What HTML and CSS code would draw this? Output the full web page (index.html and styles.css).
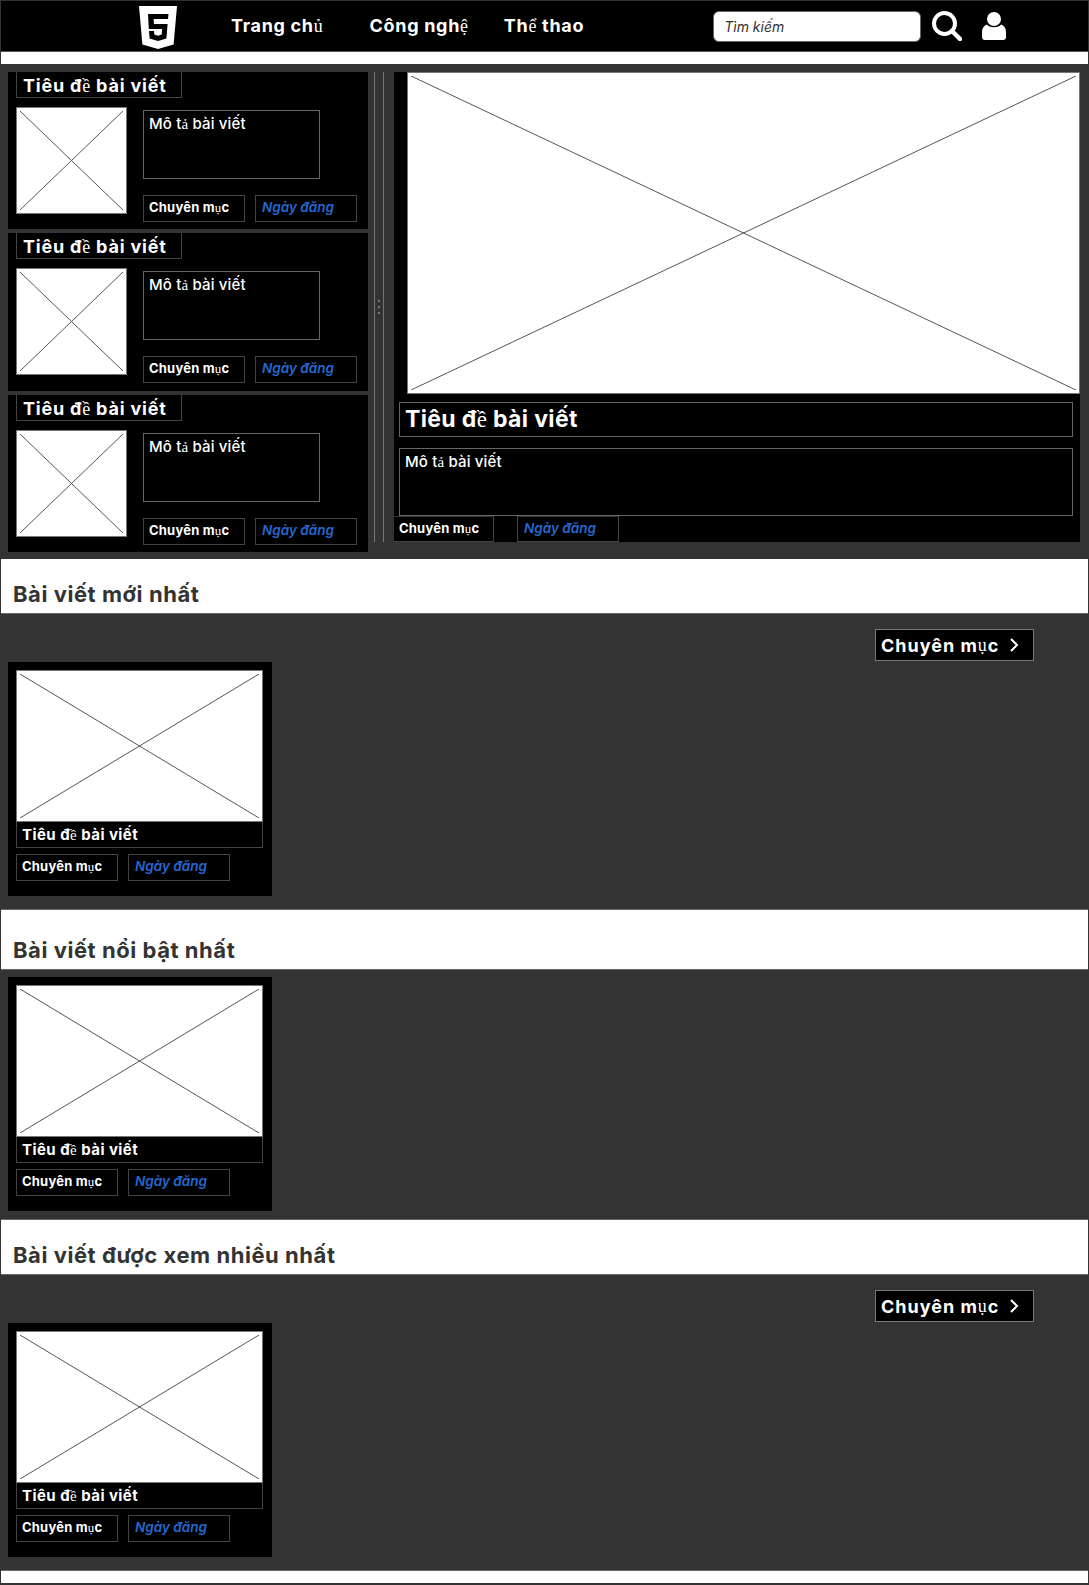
FILE: index.html
```html
<!DOCTYPE html>
<html lang="vi">
<head>
    <meta charset="UTF-8">
    <meta name="viewport" content="width=device-width, initial-scale=1.0">
    <title>Trang chủ</title>
    <link rel="stylesheet" href="styles.css">
</head>
<body>
<div class="page">
    <header class="topbar">
        <svg class="logo" viewBox="0 0 38 43">
            <path fill="#fff" d="M0 0H38L34.6 38.6 19 43 3.4 38.6Z"/>
            <path fill="#000" d="M9 8H29.5L29 13H14.6L15 18H28.6L27.4 32.5 19 35 10.6 32.5 10 25H15L15.3 28.6 19 29.7 22.7 28.6 23.1 23H9.8Z"/>
        </svg>
        <nav class="mainnav">
            <a href="#">Trang ch<span class="alt">ủ</span></a>
            <a href="#">Công ngh<span class="alt">ệ</span></a>
            <a href="#">Th<span class="alt">ể</span> thao</a>
        </nav>
        <input class="search" type="text" placeholder="Tìm kiếm">
        <svg class="icon-search" viewBox="0 0 30 30">
            <circle cx="12.5" cy="12.5" r="10.5" fill="none" stroke="#fff" stroke-width="4"/>
            <path d="M20 20L28 28" stroke="#fff" stroke-width="4.5" stroke-linecap="round"/>
        </svg>
        <svg class="icon-user" viewBox="0 0 24 28">
            <circle cx="12" cy="7" r="7" fill="#fff"/>
            <path fill="#fff" d="M5 12.5C7 16 17 16 19 12.5 22 13.5 24 16 24 20V25C24 27 23 28 21 28H3C1 28 0 27 0 25V20C0 16 2 13.5 5 12.5Z"/>
        </svg>
    </header>
    <div class="strip"></div>

    <section class="hero">
        <div class="hero-list">
            <article class="side-card">
                <h3 class="side-title">Tiêu đ<span class="alt">ề</span> bài viết</h3>
                <div class="side-body">
                    <div class="thumb side-thumb"><svg viewBox="0 0 100 100" preserveAspectRatio="none"><line x1="0" y1="0" x2="100" y2="100"/><line x1="100" y1="0" x2="0" y2="100"/></svg></div>
                    <div class="side-info">
                        <p class="desc side-desc">Mô t<span class="alt">ả</span> bài viết</p>
                        <div class="meta"><span class="tag">Chuyên m<span class="alt">ụ</span>c</span><span class="date">Ngày đăng</span></div>
                    </div>
                </div>
            </article>
            <article class="side-card side-card-tall">
                <h3 class="side-title">Tiêu đ<span class="alt">ề</span> bài viết</h3>
                <div class="side-body">
                    <div class="thumb side-thumb"><svg viewBox="0 0 100 100" preserveAspectRatio="none"><line x1="0" y1="0" x2="100" y2="100"/><line x1="100" y1="0" x2="0" y2="100"/></svg></div>
                    <div class="side-info">
                        <p class="desc side-desc">Mô t<span class="alt">ả</span> bài viết</p>
                        <div class="meta"><span class="tag">Chuyên m<span class="alt">ụ</span>c</span><span class="date">Ngày đăng</span></div>
                    </div>
                </div>
            </article>
            <article class="side-card">
                <h3 class="side-title">Tiêu đ<span class="alt">ề</span> bài viết</h3>
                <div class="side-body">
                    <div class="thumb side-thumb"><svg viewBox="0 0 100 100" preserveAspectRatio="none"><line x1="0" y1="0" x2="100" y2="100"/><line x1="100" y1="0" x2="0" y2="100"/></svg></div>
                    <div class="side-info">
                        <p class="desc side-desc">Mô t<span class="alt">ả</span> bài viết</p>
                        <div class="meta"><span class="tag">Chuyên m<span class="alt">ụ</span>c</span><span class="date">Ngày đăng</span></div>
                    </div>
                </div>
            </article>
        </div>

        <div class="splitter"><div class="grip"><span></span><span></span><span></span></div></div>

        <article class="hero-main">
            <div class="thumb main-thumb"><svg viewBox="0 0 100 100" preserveAspectRatio="none"><line x1="0" y1="0" x2="100" y2="100"/><line x1="100" y1="0" x2="0" y2="100"/></svg></div>
            <h2 class="main-title">Tiêu đ<span class="alt">ề</span> bài viết</h2>
            <p class="desc main-desc">Mô t<span class="alt">ả</span> bài viết</p>
            <div class="meta main-meta"><span class="tag">Chuyên m<span class="alt">ụ</span>c</span><span class="date">Ngày đăng</span></div>
        </article>
    </section>

    <h2 class="section-head">Bài viết mới nhất</h2>
    <section class="section">
        <a class="more" href="#">Chuyên m<span class="alt">ụ</span>c
            <svg viewBox="0 0 10 16"><path d="M2 2L8 8 2 14" fill="none" stroke="#fff" stroke-width="2"/></svg>
        </a>
        <article class="card">
            <div class="thumb card-thumb"><svg viewBox="0 0 100 100" preserveAspectRatio="none"><line x1="0" y1="0" x2="100" y2="100"/><line x1="100" y1="0" x2="0" y2="100"/></svg></div>
            <h3 class="card-title">Tiêu đ<span class="alt">ề</span> bài viết</h3>
            <div class="meta"><span class="tag">Chuyên m<span class="alt">ụ</span>c</span><span class="date">Ngày đăng</span></div>
        </article>
    </section>

    <h2 class="section-head section-head-tall">Bài viết nổi bật nhất</h2>
    <section class="section section-plain">
        <article class="card">
            <div class="thumb card-thumb"><svg viewBox="0 0 100 100" preserveAspectRatio="none"><line x1="0" y1="0" x2="100" y2="100"/><line x1="100" y1="0" x2="0" y2="100"/></svg></div>
            <h3 class="card-title">Tiêu đ<span class="alt">ề</span> bài viết</h3>
            <div class="meta"><span class="tag">Chuyên m<span class="alt">ụ</span>c</span><span class="date">Ngày đăng</span></div>
        </article>
    </section>

    <h2 class="section-head">Bài viết được xem nhiều nhất</h2>
    <section class="section">
        <a class="more" href="#">Chuyên m<span class="alt">ụ</span>c
            <svg viewBox="0 0 10 16"><path d="M2 2L8 8 2 14" fill="none" stroke="#fff" stroke-width="2"/></svg>
        </a>
        <article class="card">
            <div class="thumb card-thumb"><svg viewBox="0 0 100 100" preserveAspectRatio="none"><line x1="0" y1="0" x2="100" y2="100"/><line x1="100" y1="0" x2="0" y2="100"/></svg></div>
            <h3 class="card-title">Tiêu đ<span class="alt">ề</span> bài viết</h3>
            <div class="meta"><span class="tag">Chuyên m<span class="alt">ụ</span>c</span><span class="date">Ngày đăng</span></div>
        </article>
    </section>

    <div class="foot"></div>
</div>
</body>
</html>
```

FILE: styles.css
```css
* {
    box-sizing: border-box;
}

body {
    margin: 0;
    background: #fff;
    font-family: Inter, 'Liberation Sans', sans-serif;
    color: #fff;
}

h2, h3, p {
    margin: 0;
}

.alt {
    font-family: 'Liberation Serif', serif;
    font-weight: 400;
}

.page {
    height: 1585px;
    border: 1px solid #333;
    border-bottom-width: 2px;
}

/* header */
.topbar {
    height: 51px;
    background: #000;
    display: flex;
    align-items: center;
    padding-left: 138px;
    border-bottom: 1px solid #555;
}

.logo {
    width: 38px;
    height: 43px;
    margin-top: 2px;
    flex: none;
}

.mainnav {
    display: flex;
    margin-left: 54px;
}

.mainnav a {
    color: #fff;
    text-decoration: none;
    font-size: 18px;
    font-weight: 700;
    letter-spacing: 0.7px;
    margin-right: 46px;
}

.mainnav a:nth-child(2) {
    margin-right: 35px;
}

.search {
    width: 208px;
    height: 31px;
    margin-left: 83px;
    padding: 0 10px;
    border: 1px solid #666;
    border-radius: 6px;
    background: #fff;
    font-family: Inter, sans-serif;
    font-size: 14px;
    font-style: italic;
}

.search::placeholder {
    color: #333;
    opacity: 1;
}

.icon-search {
    width: 30px;
    height: 30px;
    margin-left: 11px;
}

.icon-user {
    width: 24px;
    height: 28px;
    margin-left: 20px;
}

.strip {
    height: 12px;
}

/* hero */
.hero {
    background: #333;
    display: flex;
    align-items: flex-start;
    padding: 8px 8px 7px 7px;
    height: 495px;
}

.hero-list {
    width: 360px;
    flex: none;
}

.side-card {
    background: #000;
    height: 157px;
    padding-left: 8px;
    margin-bottom: 4px;
}

.side-card-tall {
    height: 158px;
}

.side-card:last-child {
    margin-bottom: 0;
}

.side-title {
    width: 166px;
    height: 26px;
    padding-left: 6px;
    border: 1px solid #444;
    border-top: 0;
    font-size: 18px;
    letter-spacing: 0.8px;
    line-height: 27px;
}

.side-body {
    display: flex;
    margin-top: 9px;
}

.thumb {
    background: #fff;
    border: 1px solid #777;
    padding: 3px;
    flex: none;
}

.thumb svg {
    display: block;
    width: 100%;
    height: 100%;
}

.thumb line {
    stroke: #555;
    stroke-width: 1;
    vector-effect: non-scaling-stroke;
}

.side-thumb {
    width: 111px;
    height: 107px;
}

.side-info {
    margin-left: 16px;
    padding-top: 3px;
}

.desc {
    border: 1px solid #666;
    font-size: 15px;
    font-weight: 500;
    letter-spacing: 0.15px;
    line-height: 25px;
    padding-left: 5px;
}

.side-desc {
    width: 177px;
    height: 69px;
    margin-bottom: 16px;
}

.meta {
    display: flex;
    gap: 10px;
}

.tag, .date {
    display: block;
    width: 102px;
    height: 27px;
    padding-left: 5px;
    border: 1px solid #444;
    line-height: 22px;
}

.tag {
    font-size: 13px;
    font-weight: 700;
    letter-spacing: 0.2px;
}

.date {
    padding-left: 6px;
    font-size: 13.5px;
    font-style: italic;
    font-weight: 600;
    color: #2468d0;
}

.splitter {
    width: 26px;
    height: 470px;
    flex: none;
    padding-left: 6px;
}

.grip {
    display: flex;
    flex-direction: column;
    align-items: center;
    justify-content: center;
    gap: 4px;
    width: 10px;
    height: 100%;
    border-left: 1px solid #777;
    border-right: 1px solid #777;
}

.grip span {
    width: 2px;
    height: 2px;
    background: #777;
}

.hero-main {
    width: 686px;
    height: 470px;
    background: #000;
    flex: none;
}

.main-thumb {
    width: 673px;
    height: 322px;
    margin-left: 13px;
}

.main-title {
    height: 35px;
    margin: 8px 7px 0 5px;
    padding-left: 5px;
    border: 1px solid #666;
    font-size: 23px;
    letter-spacing: 0.35px;
    line-height: 32px;
}

.main-desc {
    height: 68px;
    margin: 11px 7px 0 5px;
}

.main-meta {
    gap: 23px;
}

.main-meta .tag {
    width: 100px;
    padding-left: 5px;
    border-top-color: #333;
    border-left: 0;
    height: 26px;
}

.main-meta .date {
    height: 26px;
    border-top-color: #333;
}

/* sections */
.section-head {
    height: 54px;
    padding: 20px 0 0 12px;
    color: #333;
    font-size: 22px;
    font-weight: 700;
    letter-spacing: 0.55px;
    line-height: 30px;
}

.section-head-tall {
    height: 59px;
    padding-top: 25px;
}

.section {
    background: #333;
    border-top: 1px solid #666;
    border-bottom: 1px solid #666;
    padding: 15px 0 13px 7px;
    height: 297px;
}

.section-plain {
    padding-top: 7px;
    height: 251px;
}

.more {
    display: flex;
    align-items: center;
    width: 159px;
    height: 32px;
    margin: 0 54px 1px auto;
    padding-left: 5px;
    background: #000;
    border: 1px solid #777;
    color: #fff;
    text-decoration: none;
    font-size: 18px;
    font-weight: 700;
    letter-spacing: 1px;
}

.more svg {
    width: 10px;
    height: 16px;
    margin-left: 10px;
}

.card {
    width: 264px;
    height: 234px;
    padding: 8px;
    background: #000;
}

.card-thumb {
    width: 247px;
    height: 152px;
}

.card-title {
    width: 247px;
    height: 26px;
    padding-left: 5px;
    border: 1px solid #444;
    border-top: 0;
    font-size: 15px;
    letter-spacing: 0.45px;
    line-height: 26px;
    margin-bottom: 6px;
}

.foot {
    height: 13px;
}
```
